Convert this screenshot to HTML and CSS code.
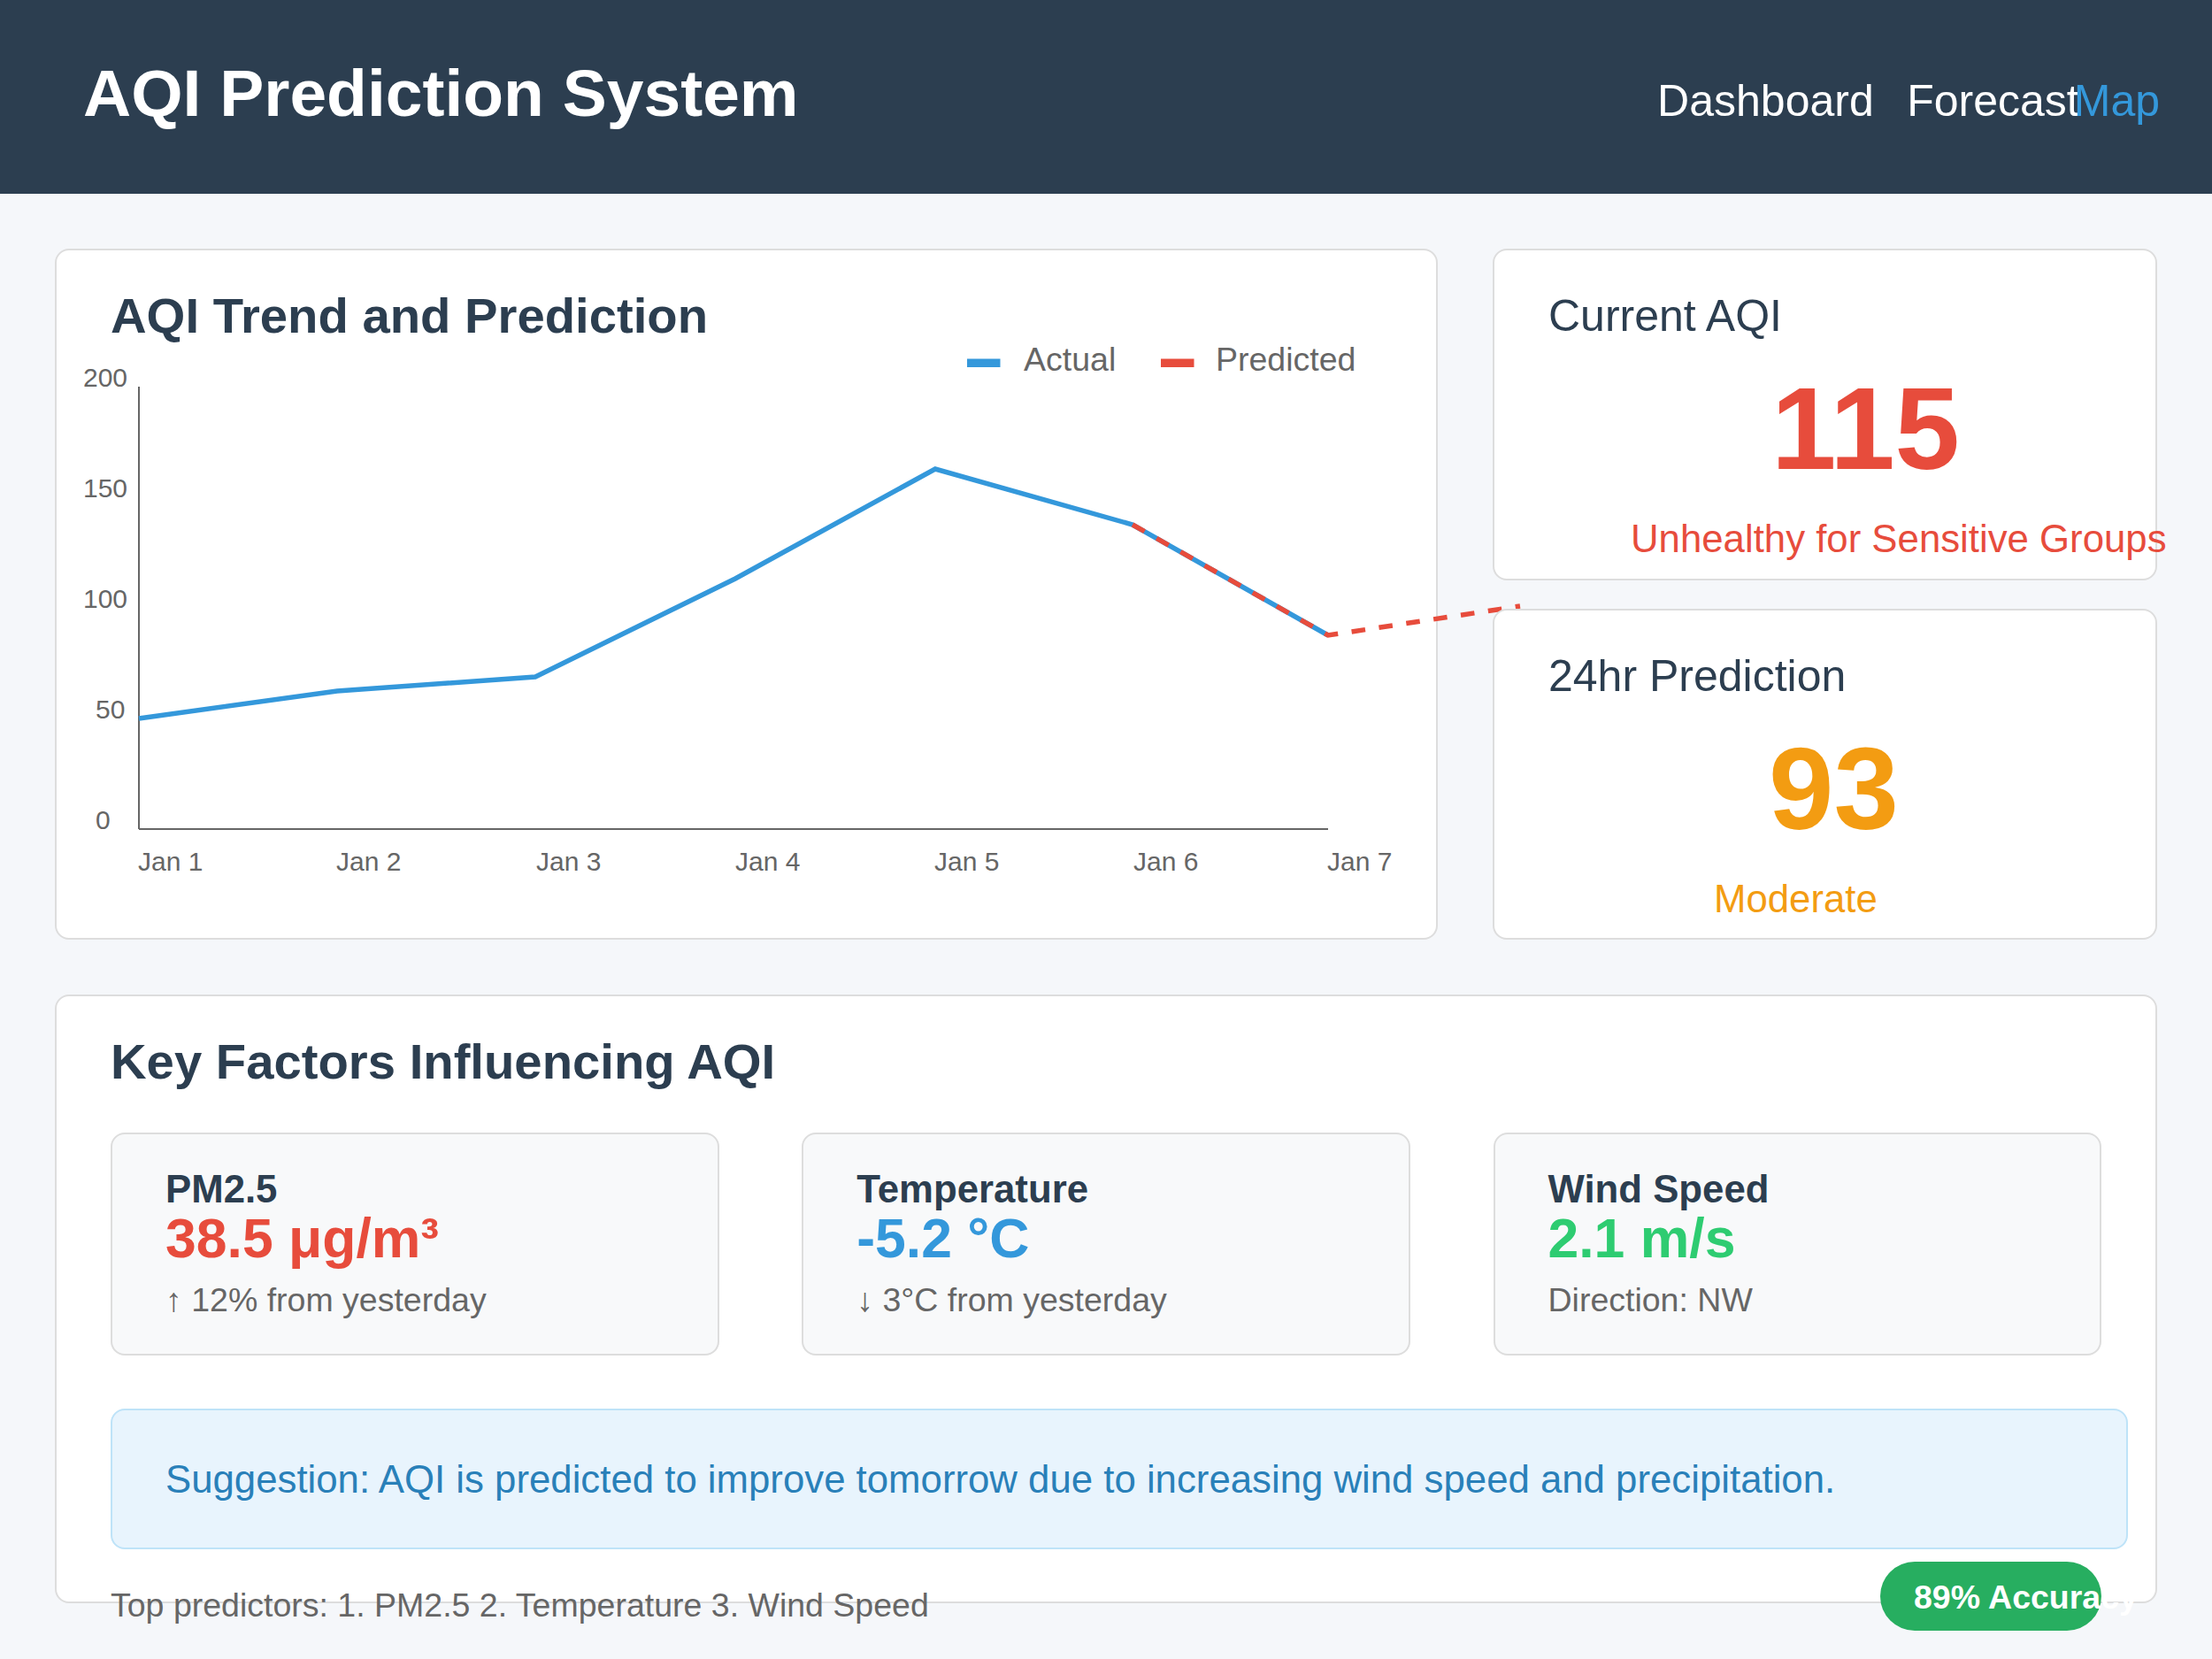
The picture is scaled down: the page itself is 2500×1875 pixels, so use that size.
FILE: index.html
```html
<!DOCTYPE html>
<html lang="en">
<head>
<meta charset="utf-8">
<title>AQI Prediction System</title>
<link rel="stylesheet" href="styles.css">
</head>
<body>
<header class="topbar">
  <h1 class="brand">AQI Prediction System</h1>
  <nav class="nav">
    <a class="nav-link">Dashboard</a>
    <a class="nav-link nav-gap">Forecast</a>
    <a class="nav-link nav-active">Map</a>
  </nav>
</header>
<main class="main">
  <section class="top-row">
    <div class="card chart-card">
      <h2 class="card-title">AQI Trend and Prediction</h2>
      <svg class="chart" width="1436" height="640" viewBox="0 0 1436 640">
        <rect x="968" y="17.5" width="37.5" height="9.5" fill="#3498db"/>
        <text class="legend-text" x="1032" y="30.7">Actual</text>
        <rect x="1187" y="17.5" width="37.5" height="9.5" fill="#e74c3c"/>
        <text class="legend-text" x="1249" y="30.7">Predicted</text>
        <line class="axis" x1="32" y1="49" x2="32" y2="549"/>
        <line class="axis" x1="32" y1="549" x2="1376" y2="549"/>
        <text class="tick" x="-31" y="49">200</text>
        <text class="tick" x="-31" y="174">150</text>
        <text class="tick" x="-31" y="299">100</text>
        <text class="tick" x="-17" y="424">50</text>
        <text class="tick" x="-17" y="549">0</text>
        <polyline class="actual" points="32,424 256,393 480,377 706,266 932,142 1155,205 1376,330"/>
        <polyline class="predicted" points="1155,205 1376,330 1593,297"/>
        <text class="tick" x="31" y="596.4">Jan 1</text>
        <text class="tick" x="255" y="596.4">Jan 2</text>
        <text class="tick" x="481" y="596.4">Jan 3</text>
        <text class="tick" x="706" y="596.4">Jan 4</text>
        <text class="tick" x="931" y="596.4">Jan 5</text>
        <text class="tick" x="1156" y="596.4">Jan 6</text>
        <text class="tick" x="1375" y="596.4">Jan 7</text>
      </svg>
    </div>
    <div class="side">
      <div class="card stat-card">
        <h3 class="stat-title">Current AQI</h3>
        <div class="stat-value red val-current">115</div>
        <div class="stat-label red lab-current">Unhealthy for Sensitive Groups</div>
      </div>
      <div class="card stat-card">
        <h3 class="stat-title">24hr Prediction</h3>
        <div class="stat-value orange val-pred">93</div>
        <div class="stat-label orange lab-pred">Moderate</div>
      </div>
    </div>
  </section>
  <section class="card factors-card">
    <h2 class="card-title">Key Factors Influencing AQI</h2>
    <div class="factor-grid">
      <div class="factor">
        <div class="factor-name">PM2.5</div>
        <div class="factor-value red">38.5 μg/m³</div>
        <div class="factor-note">↑ 12% from yesterday</div>
      </div>
      <div class="factor">
        <div class="factor-name">Temperature</div>
        <div class="factor-value blue">-5.2 °C</div>
        <div class="factor-note">↓ 3°C from yesterday</div>
      </div>
      <div class="factor">
        <div class="factor-name">Wind Speed</div>
        <div class="factor-value green">2.1 m/s</div>
        <div class="factor-note">Direction: NW</div>
      </div>
    </div>
    <div class="suggestion">Suggestion: AQI is predicted to improve tomorrow due to increasing wind speed and precipitation.</div>
    <div class="footer-row">
      <p class="predictors">Top predictors: 1. PM2.5 2. Temperature 3. Wind Speed</p>
      <div class="badge">89% Accuracy</div>
    </div>
  </section>
</main>
</body>
</html>
```
FILE: styles.css
```css
* { box-sizing: border-box; }
html, body { margin: 0; padding: 0; }
body {
  font-family: "Liberation Sans", Arial, sans-serif;
  background: #f5f7fa;
  color: #2c3e50;
}

.topbar {
  height: 219px;
  background: #2c3e50;
  display: flex;
  justify-content: space-between;
  align-items: flex-start;
  padding: 62px 59px 0 94px;
}
.brand {
  margin: 0;
  font-size: 75px;
  line-height: 86px;
  font-weight: 700;
  color: #fff;
}
.nav {
  margin-top: 23px;
  display: flex;
  font-size: 50px;
  line-height: 58px;
}
.nav-link { color: #fff; text-decoration: none; white-space: nowrap; }
.nav-gap { margin-left: 37.5px; }
.nav-active { color: #3498db; margin-left: -6px; }

.main { padding: 62px 62px 62px; }

.top-row {
  display: grid;
  grid-template-columns: 1563px 751px;
  column-gap: 62px;
  height: 781px;
}
.card {
  background: #fff;
  border: 2px solid #dddddd;
  border-radius: 16px;
}
.chart-card { padding: 42px 0 0 61px; }
.card-title {
  margin: 0;
  font-size: 56.25px;
  line-height: 63px;
  font-weight: 700;
  color: #2c3e50;
}
.chart { display: block; overflow: visible; }
.chart .axis { stroke: #666; stroke-width: 2; }
.chart .actual { fill: none; stroke: #3498db; stroke-width: 5.5; }
.chart .predicted { fill: none; stroke: #e74c3c; stroke-width: 5.5; stroke-dasharray: 15.6 15.6; }
.chart .tick { font-size: 30px; fill: #666; }
.chart .legend-text { font-size: 37.5px; fill: #666; }

.side { display: flex; flex-direction: column; gap: 32px; }
.stat-card { flex: 1; position: relative; padding: 47px 61px 0; }
.stat-title { margin: 0; font-size: 50px; line-height: 54px; font-weight: 400; color: #2c3e50; }
.stat-value { margin-top: 35px; font-size: 132px; line-height: 132px; font-weight: 700; white-space: nowrap; }
.stat-label { margin-top: 33px; font-size: 43.75px; line-height: 50px; white-space: nowrap; }
.val-current { margin-left: 252px; }
.lab-current { margin-left: 93px; }
.val-pred { margin-left: 249px; }
.lab-pred { margin-left: 187px; }

.red { color: #e74c3c; }
.orange { color: #f39c12; }
.blue { color: #3498db; }
.green { color: #2ecc71; }

.factors-card { margin-top: 62px; height: 688px; padding: 42px 61px 0; }
.factor-grid {
  margin-top: 49px;
  display: grid;
  grid-template-columns: repeat(3, 1fr);
  column-gap: 93.75px;
}
.factor {
  height: 252px;
  background: #f8f9fa;
  border: 2px solid #dddddd;
  border-radius: 16px;
  padding: 38.5px 60px 0;
}
.factor-name { font-size: 43.75px; line-height: 45px; font-weight: 700; color: #2c3e50; white-space: nowrap; }
.factor-value { font-size: 62.5px; line-height: 66px; font-weight: 700; white-space: nowrap; }
.factor-note { margin-top: 17.5px; font-size: 37.5px; line-height: 40px; color: #666; white-space: nowrap; }

.suggestion {
  margin-top: 60px;
  width: 2280px;
  height: 159px;
  background: #e8f4fd;
  border: 2px solid #bee3f8;
  border-radius: 16px;
  padding: 53px 60px 0;
  font-size: 43.75px;
  line-height: 49px;
  color: #2980b9;
  white-space: nowrap;
}
.footer-row {
  margin-top: 14px;
  display: flex;
  justify-content: space-between;
  align-items: flex-start;
}
.predictors { margin: 29px 0 0; font-size: 37.5px; line-height: 40px; color: #666; white-space: nowrap; }
.badge {
  width: 250px;
  height: 78px;
  border-radius: 39px;
  background: #27ae60;
  color: #fff;
  font-weight: 700;
  font-size: 37.5px;
  line-height: 75px;
  padding: 3px 0 0 38px;
  white-space: nowrap;
}
```
